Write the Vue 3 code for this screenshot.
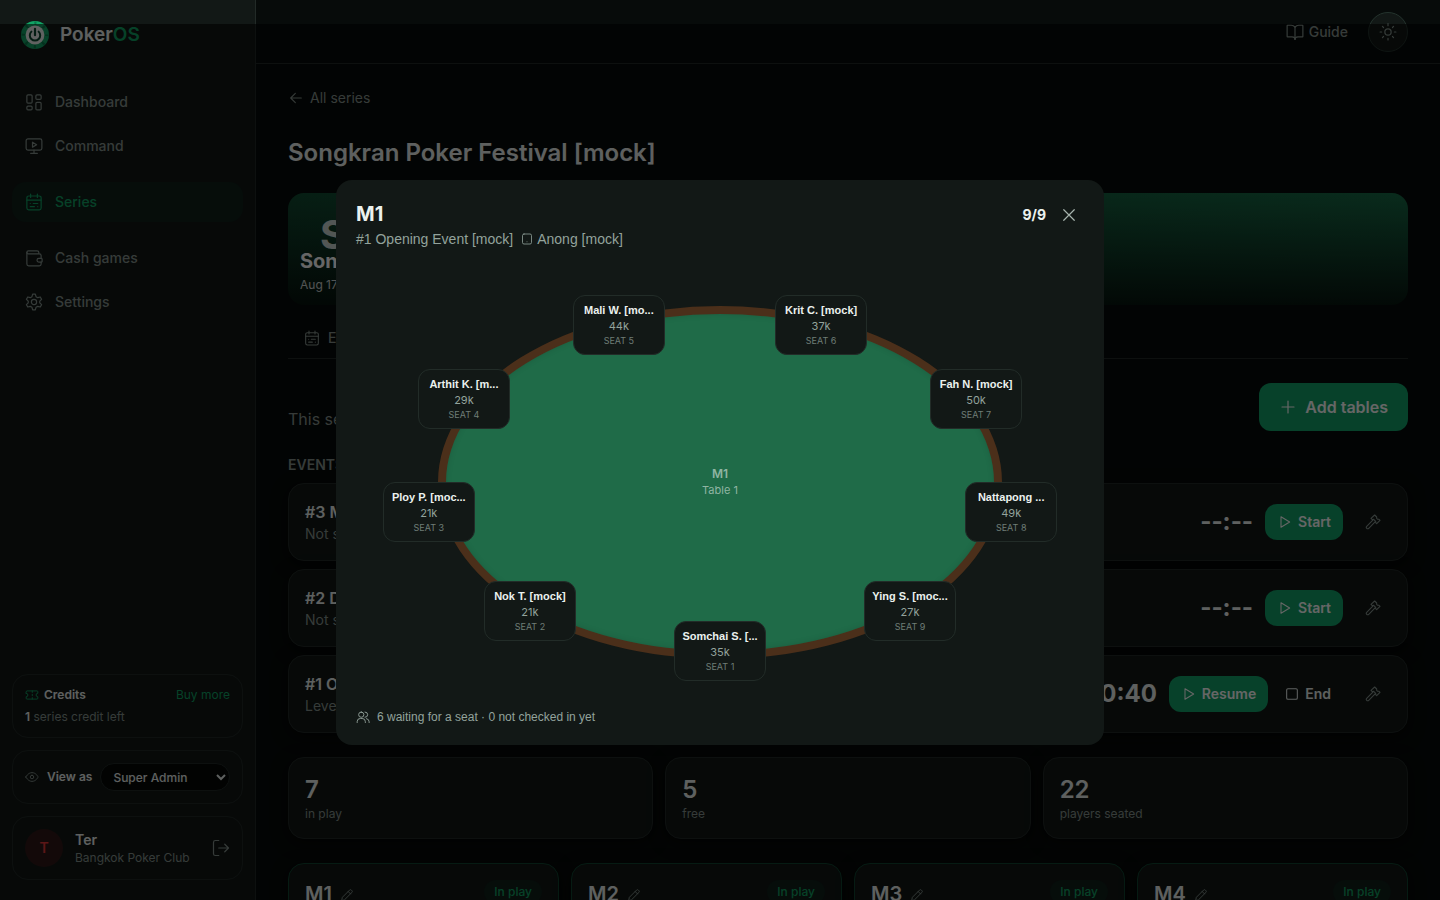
<template>
  <div class="app">
    <aside class="sidebar">
      <a href="#" class="brand">
        <svg class="logo" viewBox="0 0 30 30" fill="none">
          <circle cx="15" cy="15" r="14" fill="#12a566" />
          <circle cx="15" cy="15" r="11.6" stroke="#0c7a4c" stroke-width="4" stroke-dasharray="2.1 7.01" stroke-dashoffset="1" />
          <circle cx="15" cy="15" r="9.4" fill="#f1f4f3" />
          <path d="M11.4 11.6a5.2 5.2 0 1 0 7.2 0" stroke="#0a4a30" stroke-width="2" stroke-linecap="round" />
          <path d="M15 8.8v6.4" stroke="#0a4a30" stroke-width="2.2" stroke-linecap="round" />
        </svg>
        <span>Poker<b>OS</b></span>
      </a>

      <nav class="nav">
        <div v-for="(group, gi) in navGroups" :key="gi" class="nav-group">
          <a v-for="n in group" :key="n.label" href="#" :class="['nav-item', { active: n.label === activeNav }]">
            <svg class="icon i18" viewBox="0 0 24 24"><path v-for="d in icons[n.icon]" :key="d" :d="d" /></svg>
            {{ n.label }}
          </a>
        </div>
      </nav>

      <div class="side-bottom">
        <section class="side-card credits">
          <div class="credits-head">
            <svg class="icon i14 green" viewBox="0 0 24 24"><path v-for="d in icons.ticket" :key="d" :d="d" /></svg>
            <strong>Credits</strong>
            <a href="#">Buy more</a>
          </div>
          <p><strong>1</strong> series credit left</p>
        </section>

        <section class="side-card view-as">
          <svg class="icon i14" viewBox="0 0 24 24"><path v-for="d in icons.eye" :key="d" :d="d" /></svg>
          <label for="role">View as</label>
          <select id="role" v-model="role">
            <option v-for="r in roles" :key="r">{{ r }}</option>
          </select>
        </section>

        <section class="side-card user">
          <span class="avatar">T</span>
          <div class="user-info">
            <strong>Ter</strong>
            <span>Bangkok Poker Club</span>
          </div>
          <button class="icon-btn logout" aria-label="Log out">
            <svg class="icon i18" viewBox="0 0 24 24"><path v-for="d in icons.logout" :key="d" :d="d" /></svg>
          </button>
        </section>
      </div>
    </aside>

    <div class="page">
      <header class="topbar">
        <a href="#" class="guide">
          <svg class="icon i18" viewBox="0 0 24 24"><path v-for="d in icons.book" :key="d" :d="d" /></svg>
          Guide
        </a>
        <button class="theme" aria-label="Toggle theme">
          <svg class="icon i18" viewBox="0 0 24 24"><path v-for="d in icons.sun" :key="d" :d="d" /></svg>
        </button>
      </header>

      <main class="content">
        <a href="#" class="back">
          <svg class="icon i16" viewBox="0 0 24 24"><path v-for="d in icons.arrow" :key="d" :d="d" /></svg>
          All series
        </a>
        <h1>Songkran Poker Festival [mock]</h1>

        <div class="hero">
          <div class="banner">
            <span class="monogram">S</span>
            <h2>Songkran Poker Festival</h2>
            <p>Aug 17 – Aug 24</p>
          </div>
          <div class="tabs">
            <button class="tab">
              <svg class="icon i16" viewBox="0 0 24 24"><path v-for="d in icons.calendar" :key="d" :d="d" /></svg>
              Events
            </button>
          </div>
        </div>

        <div class="actions">
          <p>This series has 12 tables</p>
          <button class="btn large">
            <svg class="icon i18" viewBox="0 0 24 24"><path d="M12 4v16M4 12h16" /></svg>
            Add tables
          </button>
        </div>

        <section class="events">
          <h3>EVENTS</h3>
          <article v-for="e in events" :key="e.name" class="card event">
            <div class="event-info">
              <strong>{{ e.name }}</strong>
              <span>{{ e.status }}</span>
            </div>
            <span class="clock">{{ e.clock }}</span>
            <div class="event-buttons">
              <button class="btn">
                <svg class="icon i16" viewBox="0 0 24 24"><path d="M6 4.2v15.6L19 12z" /></svg>
                {{ e.action }}
              </button>
              <button v-if="e.running" class="btn ghost">
                <svg class="icon i16" viewBox="0 0 24 24"><rect x="4" y="4" width="16" height="16" rx="2" /></svg>
                End
              </button>
            </div>
            <button class="icon-btn tool" aria-label="Tools">
              <svg class="icon i16" viewBox="0 0 24 24"><path v-for="d in icons.hammer" :key="d" :d="d" /></svg>
            </button>
          </article>
        </section>

        <section class="stats">
          <div v-for="s in stats" :key="s.label" class="card stat">
            <strong>{{ s.value }}</strong>
            <span>{{ s.label }}</span>
          </div>
        </section>

        <section class="tables">
          <article v-for="t in tables" :key="t" class="card table-card">
            <h4>{{ t }}</h4>
            <button class="edit" :aria-label="`Rename ${t}`">
              <svg class="icon i14" viewBox="0 0 24 24"><path v-for="d in icons.pencil" :key="d" :d="d" /></svg>
            </button>
            <span class="pill">In play</span>
          </article>
        </section>
      </main>
    </div>

    <!-- Table map -->
    <div v-if="open" class="overlay" @click.self="open = false">
      <div class="modal" role="dialog" aria-modal="true" aria-labelledby="modal-title">
        <header class="modal-head">
          <div>
            <h2 id="modal-title">M1</h2>
            <p class="modal-sub">
              <span>#1 Opening Event [mock]</span>
              <span class="dealer">
                <svg class="icon i12" viewBox="0 0 24 24"><rect x="3" y="2" width="18" height="20" rx="3" /><path d="M12 17.500h.01" /></svg>
                Anong [mock]
              </span>
            </p>
          </div>
          <div class="modal-side">
            <strong>{{ seats.length }}/9</strong>
            <button class="icon-btn close" aria-label="Close" @click="open = false">
              <svg class="icon i18" viewBox="0 0 24 24"><path d="M5 5l14 14M19 5L5 19" /></svg>
            </button>
          </div>
        </header>

        <div class="map">
          <div class="felt">
            <strong>M1</strong>
            <span>Table 1</span>
          </div>
          <div v-for="(s, i) in seats" :key="s.name" class="seat" :style="seatStyle(i)">
            <strong>{{ s.name }}</strong>
            <span class="stack">{{ s.stack }}</span>
            <span class="seat-no">SEAT {{ i + 1 }}</span>
          </div>
        </div>

        <footer class="modal-foot">
          <svg class="icon i14" viewBox="0 0 24 24"><path v-for="d in icons.users" :key="d" :d="d" /></svg>
          6 waiting for a seat · 0 not checked in yet
        </footer>
      </div>
    </div>
  </div>
</template>

<script setup>
import { ref } from 'vue'

const open = ref(true)
const activeNav = ref('Series')
const role = ref('Super Admin')
const roles = ['Super Admin', 'Manager', 'Dealer']

const icons = {
  dashboard: [
    'M4 2.5h4a1.5 1.5 0 0 1 1.5 1.5v8A1.5 1.5 0 0 1 8 13.5H4A1.5 1.5 0 0 1 2.5 12V4A1.5 1.5 0 0 1 4 2.5z',
    'M16 2.5h4A1.5 1.5 0 0 1 21.5 4v3A1.5 1.5 0 0 1 20 8.5h-4A1.5 1.5 0 0 1 14.5 7V4A1.5 1.5 0 0 1 16 2.5z',
    'M16 12.5h4a1.5 1.5 0 0 1 1.5 1.5v7a1.5 1.5 0 0 1-1.5 1.5h-4a1.5 1.5 0 0 1-1.5-1.5v-7a1.5 1.5 0 0 1 1.5-1.5z',
    'M4 17.5h4A1.5 1.5 0 0 1 9.5 19v2A1.5 1.5 0 0 1 8 22.5H4A1.5 1.5 0 0 1 2.5 21v-2A1.5 1.5 0 0 1 4 17.5z'
  ],
  monitor: [
    'M4 2.5h16a2.5 2.5 0 0 1 2.5 2.5v10a2.5 2.5 0 0 1-2.5 2.5H4A2.5 2.5 0 0 1 1.5 15V5A2.5 2.5 0 0 1 4 2.5z',
    'M12 17.5v4M7.5 21.8h9',
    'M10 7v6.5l5.5-3.2z'
  ],
  calendar: [
    'M5 4h14a2.5 2.5 0 0 1 2.5 2.5V20a2.5 2.5 0 0 1-2.5 2.5H5A2.5 2.5 0 0 1 2.5 20V6.5A2.5 2.5 0 0 1 5 4z',
    'M7.5 1.5V6M16.5 1.5V6M2.5 9.5h19M7 14h.01M11 14h6M7 18.2h5.5M17 18.2h.01'
  ],
  wallet: [
    'M18.5 6.5V5A2.5 2.5 0 0 0 16 2.5H4.5a2 2 0 0 0 0 4H19A2.5 2.5 0 0 1 21.5 9v3',
    'M2.5 4.5V20A2.5 2.5 0 0 0 5 22.5h14a2.5 2.5 0 0 0 2.5-2.5v-2.5',
    'M18.5 12.5H22a.8.8 0 0 1 .8.8v3.4a.8.8 0 0 1-.8.8h-3.500a2.5 2.5 0 0 1 0-5z'
  ],
  settings: [
    'M12 8.5a3.5 3.5 0 1 1 0 7 3.5 3.5 0 0 1 0-7z',
    'M10.2 1.600h3.600l.9 3.300 2.300 1.300 3.300-.9 1.800 3.100L19.700 10.800v2.400l2.400 2.400-1.800 3.100-3.300-.9-2.300 1.300-.9 3.300h-3.600l-.9-3.300L7 17.800l-3.300.9-1.800-3.100 2.400-2.400v-2.400L1.900 8.400l1.800-3.100 3.300.9 2.300-1.300z'
  ],
  ticket: [
    'M2 6.5A1.5 1.5 0 0 1 3.5 5h17A1.5 1.5 0 0 1 22 6.5V9a3 3 0 0 0 0 6v2.5a1.5 1.5 0 0 1-1.5 1.5h-17A1.5 1.5 0 0 1 2 17.5V15a3 3 0 0 0 0-6z',
    'M12.5 5v2.5M12.5 10.8v2.4M12.5 16.5V19'
  ],
  eye: [
    'M1.5 12S5 4.5 12 4.5 22.5 12 22.5 12 19 19.5 12 19.5 1.5 12 1.5 12z',
    'M12 9a3 3 0 1 1 0 6 3 3 0 0 1 0-6z'
  ],
  logout: ['M9 22H4.5A2.5 2.5 0 0 1 2 19.5v-15A2.5 2.5 0 0 1 4.5 2H9', 'M9 12h13M17 7l5 5-5 5'],
  book: [
    'M12 5.5S10 3 7 3H2a.5.5 0 0 0-.5.5V18a.5.5 0 0 0 .5.5h6c2.5 0 4 1 4 3.5 0-2.5 1.5-3.5 4-3.5h6a.5.5 0 0 0 .5-.5V3.500A.5.5 0 0 0 22 3h-5c-3 0-5 2.5-5 2.5z',
    'M12 5.5V22'
  ],
  sun: [
    'M12 7.8a4.2 4.2 0 1 1 0 8.4 4.2 4.2 0 0 1 0-8.4z',
    'M12 1.5v2M12 20.5v2M1.5 12h2M20.5 12h2M4.6 4.6L6 6M18 18l1.4 1.4M4.6 19.4L6 18M18 6l1.4-1.4'
  ],
  arrow: ['M20 12H4M11 5l-7 7 7 7'],
  hammer: [
    'M9 6.500L14.500 1.500 17.500 4.500 17.500 6.500 19 8 21 8 22.500 9.500 17.500 14.500 16 13 16 11 13 8 11 8.500z',
    'M12.500 8.500L2.600 18.400a2.100 2.100 0 0 0 3 3L15.500 11.500'
  ],
  pencil: ['M3 21l1-5L16.5 3.5a2 2 0 0 1 2.8 0l1.2 1.2a2 2 0 0 1 0 2.8L8 20z', 'M14 6l4 4'],
  users: [
    'M9 3.5a4.5 4.5 0 1 1 0 9 4.5 4.5 0 0 1 0-9z',
    'M2 21.5V20a5.5 5.5 0 0 1 5.5-5.5h3A5.5 5.5 0 0 1 16 20v1.5',
    'M15.5 3.5a4.5 4.5 0 0 1 0 9M18 14.8a5.5 5.5 0 0 1 4.5 5.4v1.3'
  ]
}

const navGroups = [
  [
    { label: 'Dashboard', icon: 'dashboard' },
    { label: 'Command', icon: 'monitor' }
  ],
  [{ label: 'Series', icon: 'calendar' }],
  [
    { label: 'Cash games', icon: 'wallet' },
    { label: 'Settings', icon: 'settings' }
  ]
]

const events = [
  { name: '#3 Main Event [mock]', status: 'Not started', clock: '--:--', action: 'Start' },
  { name: '#2 Deepstack [mock]', status: 'Not started', clock: '--:--', action: 'Start' },
  { name: '#1 Opening Event [mock]', status: 'Level 4', clock: '10:40', action: 'Resume', running: true }
]

const stats = [
  { value: 7, label: 'in play' },
  { value: 5, label: 'free' },
  { value: 22, label: 'players seated' }
]

const tables = ['M1', 'M2', 'M3', 'M4']

// names are shortened to fit the seat chip
const seats = [
  { name: 'Somchai S. [...', stack: '35k' },
  { name: 'Nok T. [mock]', stack: '21k' },
  { name: 'Ploy P. [moc...', stack: '21k' },
  { name: 'Arthit K. [m...', stack: '29k' },
  { name: 'Mali W. [mo...', stack: '44k' },
  { name: 'Krit C. [mock]', stack: '37k' },
  { name: 'Fah N. [mock]', stack: '50k' },
  { name: 'Nattapong ...', stack: '49k' },
  { name: 'Ying S. [moc...', stack: '27k' }
]

// seat 1 sits at the bottom, the rest go clockwise
const seatStyle = (i) => {
  const a = (i / seats.length) * Math.PI * 2
  return {
    left: `${50 - 44 * Math.sin(a)}%`,
    top: `${50 + 40 * Math.cos(a)}%`
  }
}
</script>

<style>
body {
  margin: 0;
  background: #070b0a;
}
</style>

<style scoped>
.app {
  --bg: #070b0a;
  --surface: #121816;
  --line: #222a27;
  --text: #ebf1ee;
  --muted: #87958f;
  --green: #10a365;
  --narrow: 'Liberation Sans', Arial, sans-serif;
  display: flex;
  height: 100vh;
  overflow: hidden;
  background: var(--bg);
  color: var(--text);
  font-family: Inter, 'Liberation Sans', sans-serif;
  font-size: 14px;
  line-height: 20px;
  color-scheme: dark;
}

.app * {
  box-sizing: border-box;
}

h1, h2, h3, h4, p {
  margin: 0;
}

a {
  color: inherit;
  text-decoration: none;
}

button {
  font: inherit;
  color: inherit;
  background: none;
  border: 0;
  padding: 0;
  cursor: pointer;
}

strong {
  font-weight: 600;
}

.icon {
  flex: none;
  display: block;
  fill: none;
  stroke: currentColor;
  stroke-width: 1.6;
  stroke-linecap: round;
  stroke-linejoin: round;
}

.i12 { width: 12px; height: 12px; }
.i14 { width: 14px; height: 14px; }
.i16 { width: 16px; height: 16px; }
.i18 { width: 18px; height: 18px; }

.green {
  color: var(--green);
}

/* Sidebar */
.sidebar {
  flex: none;
  display: flex;
  flex-direction: column;
  width: 256px;
  background: var(--surface);
  border-right: 1px solid var(--line);
}

.brand {
  display: flex;
  align-items: center;
  gap: 10px;
  padding: 20px 20px 0;
  font-size: 19px;
  font-weight: 600;
  line-height: 28px;
}

.brand b {
  color: var(--green);
  font-weight: 600;
}

.logo {
  width: 30px;
  height: 30px;
}

.nav {
  display: flex;
  flex-direction: column;
  gap: 16px;
  padding: 32px 12px 0;
}

.nav-group {
  display: flex;
  flex-direction: column;
  gap: 4px;
}

.nav-item {
  display: flex;
  align-items: center;
  gap: 12px;
  height: 40px;
  padding: 0 13px;
  border-radius: 14px;
  color: var(--muted);
  font-weight: 500;
}

.nav-item.active {
  background: #0f211a;
  color: var(--green);
}

.side-bottom {
  display: flex;
  flex-direction: column;
  gap: 12px;
  margin-top: auto;
  padding: 0 12px 20px;
  font-size: 12px;
  line-height: 16px;
}

.side-card {
  padding: 12px;
  border: 1px solid var(--line);
  border-radius: 16px;
  color: var(--muted);
}

.side-card strong,
.side-card label {
  color: var(--text);
}

.credits-head {
  display: flex;
  align-items: center;
  gap: 5px;
  margin-bottom: 6px;
}

.credits-head a {
  margin-left: auto;
  color: var(--green);
}

.view-as {
  display: flex;
  align-items: center;
  gap: 8px;
}

.view-as label {
  font-weight: 600;
  white-space: nowrap;
}

.view-as select {
  flex: 1;
  min-width: 0;
  height: 28px;
  padding: 0 8px;
  border: 1px solid var(--line);
  border-radius: 14px;
  background: #050807;
  color: var(--text);
  font: inherit;
  font-weight: 500;
}

.user {
  display: flex;
  align-items: center;
  gap: 12px;
}

.avatar {
  display: grid;
  place-items: center;
  width: 38px;
  height: 38px;
  border-radius: 50%;
  background: #301818;
  color: #e5383b;
  font-size: 14px;
  font-weight: 600;
}

.user-info {
  display: flex;
  flex: 1;
  flex-direction: column;
}

.user-info strong {
  font-size: 14px;
  line-height: 20px;
}

.icon-btn {
  display: grid;
  place-items: center;
  color: var(--muted);
}

/* Page */
.page {
  display: flex;
  flex: 1;
  flex-direction: column;
  min-width: 0;
}

.topbar {
  flex: none;
  display: flex;
  align-items: center;
  justify-content: flex-end;
  gap: 20px;
  height: 64px;
  padding: 0 32px;
  border-bottom: 1px solid var(--line);
  color: var(--muted);
}

.guide {
  display: flex;
  align-items: center;
  gap: 5px;
  font-weight: 500;
}

.theme {
  display: grid;
  place-items: center;
  width: 40px;
  height: 40px;
  border: 1px solid #24332d;
  border-radius: 50%;
  background: var(--surface);
}

.content {
  display: flex;
  flex-direction: column;
  gap: 24px;
  padding: 24px 32px;
}

.content > * {
  flex: none;
}

.back {
  display: flex;
  align-items: center;
  gap: 6px;
  padding-bottom: 5px;
  color: var(--muted);
}

h1 {
  font-size: 24px;
  font-weight: 600;
  line-height: 32px;
}

.hero {
  display: flex;
  flex-direction: column;
  gap: 12px;
}

.banner {
  position: relative;
  display: flex;
  flex-direction: column;
  justify-content: flex-end;
  gap: 2px;
  height: 112px;
  padding: 12px;
  border-radius: 16px;
  background: linear-gradient(to top, rgba(4, 8, 6, 0.85), rgba(4, 8, 6, 0.05)), linear-gradient(90deg, #125035, #19714b);
  color: #fff;
}

.banner h2 {
  font-size: 20px;
  font-weight: 700;
  line-height: 28px;
}

.banner p {
  font-size: 12px;
  line-height: 16px;
  opacity: 0.8;
}

.monogram {
  position: absolute;
  left: 32px;
  top: 22px;
  font-size: 40px;
  font-weight: 700;
  line-height: 40px;
  opacity: 0.8;
}

.tabs {
  display: flex;
  height: 42px;
  border-bottom: 1px solid var(--line);
  color: var(--muted);
}

.tab {
  display: flex;
  align-items: center;
  gap: 8px;
  padding: 0 16px;
  font-weight: 500;
}

.actions {
  display: flex;
  align-items: flex-end;
  justify-content: space-between;
  color: var(--muted);
  font-size: 16px;
  line-height: 24px;
}

.btn {
  display: flex;
  align-items: center;
  gap: 5px;
  height: 36px;
  padding: 0 12px;
  border-radius: 12px;
  background: #12a369;
  color: #fff;
  font-weight: 600;
}

.btn.ghost {
  background: none;
  color: var(--text);
}

.btn.large {
  gap: 8px;
  height: 48px;
  padding: 0 20px;
  font-size: 16px;
}

.card {
  border: 1px solid var(--line);
  border-radius: 16px;
  background: var(--surface);
  box-shadow: 0 4px 16px rgba(0, 0, 0, 0.5);
}

.events {
  display: flex;
  flex-direction: column;
  gap: 8px;
}

.events h3 {
  color: var(--muted);
  font-size: 14px;
  font-weight: 600;
  line-height: 20px;
}

.event {
  display: flex;
  align-items: center;
  gap: 12px;
  padding: 16px;
}

.event-info {
  display: flex;
  flex: 1;
  flex-direction: column;
}

.event-info strong {
  font-size: 16px;
  line-height: 24px;
}

.event-info span {
  color: var(--muted);
}

.clock {
  font-size: 24px;
  font-weight: 700;
  line-height: 32px;
}

.event-buttons {
  display: flex;
  gap: 4px;
}

.tool {
  width: 36px;
  height: 36px;
}

.stats {
  display: grid;
  grid-template-columns: repeat(3, 1fr);
  gap: 12px;
}

.stat {
  display: flex;
  flex-direction: column;
  padding: 16px;
}

.stat strong {
  font-size: 24px;
  line-height: 32px;
}

.stat span {
  color: var(--muted);
  font-size: 12px;
  line-height: 16px;
}

.tables {
  display: grid;
  grid-template-columns: repeat(4, 1fr);
  gap: 12px;
}

.table-card {
  display: flex;
  align-items: flex-start;
  height: 160px;
  padding: 16px;
  border-color: #0f4430;
}

.table-card h4 {
  font-size: 20px;
  font-weight: 600;
  line-height: 28px;
}

.edit {
  padding: 8px;
  color: var(--muted);
}

.pill {
  margin-left: auto;
  padding: 4px 10px;
  border-radius: 12px;
  background: #0f211a;
  color: var(--green);
  font-size: 12px;
  font-weight: 500;
  line-height: 16px;
}

/* Modal */
.overlay {
  position: fixed;
  inset: 0;
  margin-top: 24px;
  display: grid;
  place-items: center;
  padding: 16px;
  background: rgba(0, 0, 0, 0.6);
}

.modal {
  display: flex;
  flex-direction: column;
  width: 100%;
  max-width: 768px;
  padding: 20px;
  border-radius: 16px;
  background: var(--surface);
}

.modal-head {
  display: flex;
  align-items: flex-start;
  justify-content: space-between;
  margin-bottom: 24px;
}

.modal-head h2 {
  font-size: 20px;
  font-weight: 700;
  line-height: 28px;
}

.modal-sub {
  display: flex;
  gap: 8px;
  padding-top: 1px;
  color: #93a39c;
  font-family: var(--narrow);
}

.dealer {
  display: flex;
  align-items: center;
  gap: 4px;
}

.modal-side {
  display: flex;
  align-items: center;
  gap: 8px;
}

.modal-side strong {
  font-weight: 700;
}

.close {
  width: 30px;
  height: 30px;
  color: #a6b3ad;
}

.map {
  position: relative;
  align-self: center;
  width: 100%;
  max-width: 672px;
  aspect-ratio: 16 / 10;
}

.felt {
  position: absolute;
  inset: 8%;
  display: flex;
  flex-direction: column;
  align-items: center;
  justify-content: center;
  padding-bottom: 2px;
  border: 8px solid #4b2f1a;
  border-radius: 50%;
  background: #1f6b48;
  box-shadow: inset 0 0 6px rgba(0, 0, 0, 0.12);
  color: #8fb5a3;
  font-size: 11px;
  line-height: 16px;
}

.felt strong {
  font-size: 12px;
}

.seat {
  position: absolute;
  display: flex;
  flex-direction: column;
  align-items: center;
  width: 92px;
  padding: 6px 7px 7px;
  border: 1px solid #222c28;
  border-radius: 12px;
  background: var(--surface);
  transform: translate(-50%, -50%);
}

.seat strong {
  white-space: nowrap;
  font-family: var(--narrow);
  font-size: 11px;
  font-weight: 700;
  line-height: 16px;
}

.stack {
  color: #93a39c;
  font-size: 11px;
  line-height: 16px;
}

.seat-no {
  color: #6f7d77;
  font-size: 9px;
  line-height: 13px;
}

.modal-foot {
  display: flex;
  align-items: center;
  gap: 7px;
  margin-top: 16px;
  color: #93a39c;
  font-family: var(--narrow);
  font-size: 12px;
  line-height: 16px;
}
</style>
